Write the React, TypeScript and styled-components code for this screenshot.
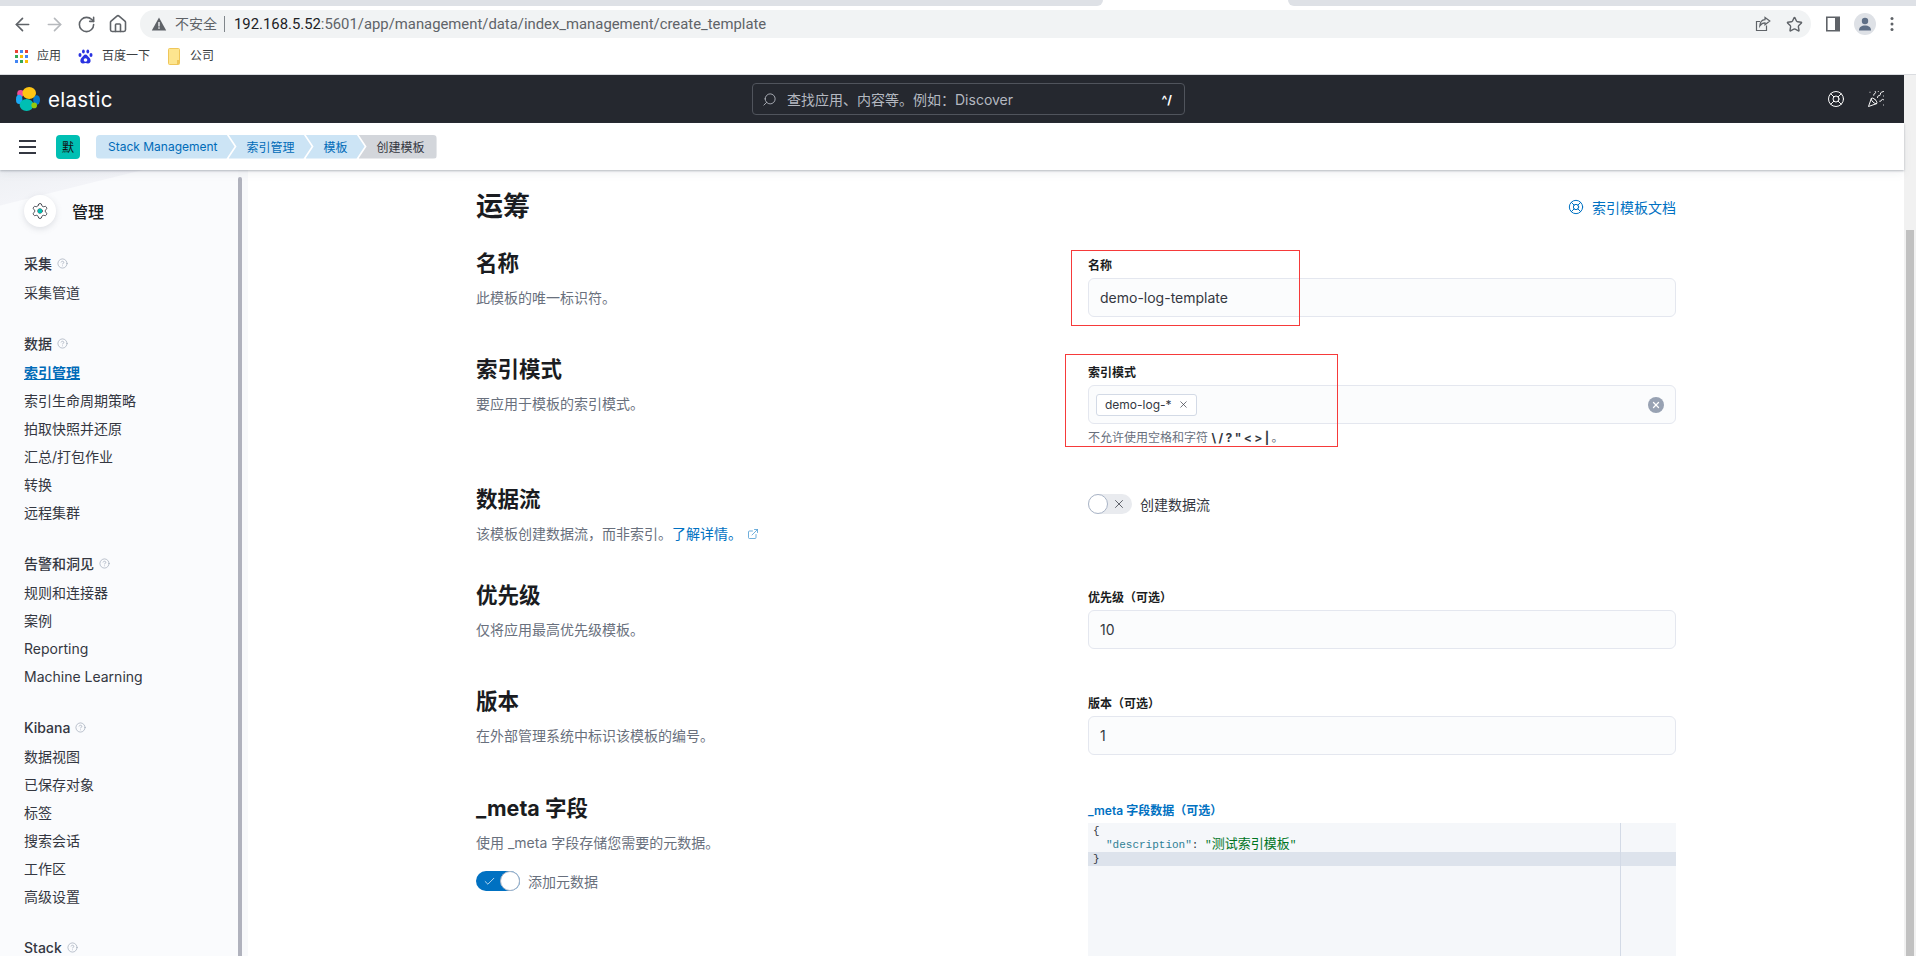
import React from "react";
import styled, { createGlobalStyle } from "styled-components";
import { ArrowLeft, ArrowRight, RotateCw, Home, Star, LifeBuoy, PartyPopper, Settings, Search, X, Check, ExternalLink, HelpCircle } from "lucide-react";

const Global = createGlobalStyle`
  html, body { margin: 0; padding: 0; height: 100%; overflow: hidden; background: #fff; }
  body { font-family: Inter, "Noto Sans CJK SC", sans-serif; color: #343741; }
  #root { height: 956px; }
  * { box-sizing: border-box; }
`;

const Page = styled.div`
  width: 1916px; height: 956px; display: flex; flex-direction: column; overflow: hidden;
`;

/* ---------- browser chrome ---------- */
const TabStrip = styled.div`
  height: 6px; display: flex; background: #fff; flex: none;
`;
const TabGrey = styled.div<{ $w: string; $r: string }>`
  width: ${p => p.$w}; background: #dee1e6; border-radius: ${p => p.$r};
`;
const TabActive = styled.div`
  width: 185px; background: #fff;
`;
const Toolbar = styled.div`
  height: 36px; padding-top: 4px; display: flex; align-items: flex-start; flex: none; background: #fff;
`;
const NavButton = styled.div`
  width: 32px; height: 28px; display: flex; align-items: center; justify-content: center; color: #5f6368;
`;
const NavGroup = styled.div`
  width: 140px; padding-left: 6px; display: flex; height: 28px;
`;
const AddressBar = styled.div`
  width: 1671px; height: 28px; border-radius: 14px; background: #f1f3f4; display: flex; align-items: center;
  padding-left: 11px; font-family: Roboto, "Noto Sans CJK SC", sans-serif; color: #5f6368;
`;
const Insecure = styled.span`
  font-size: 14px; margin-left: 8px; color: #5f6368; width: 50px; border-right: 1px solid #80868b; line-height: 16px;
`;
const Url = styled.div`
  font-size: 14.85px; margin-left: 9px; color: #5f6368; flex: 1; white-space: nowrap;
`;
const Host = styled.span`
  color: #202124;
`;
const AddressIcons = styled.div`
  display: flex; align-items: center; gap: 15px; padding-right: 8px; color: #5f6368;
`;
const ToolbarRight = styled.div`
  flex: 1; display: flex; align-items: center; height: 28px; padding-left: 15px; gap: 14px;
`;
const Avatar = styled.div`
  width: 22px; height: 22px; border-radius: 50%; background: #dee1e6; display: flex; align-items: center; justify-content: center;
`;
const Bookmarks = styled.div`
  height: 33px; padding-bottom: 4px; flex: none; display: flex; align-items: center; padding-left: 15px; background: #fff;
  border-bottom: 1px solid #dadce0; font-size: 12px; color: #3c4043;
`;
const Bookmark = styled.div<{ $gap: number; $w: number }>`
  width: ${p => p.$w}px; display: flex; align-items: center; gap: ${p => p.$gap}px; line-height: 16px;
`;
const AppArea = styled.div`
  flex: 1; display: flex; min-height: 0;
`;
const Viewport = styled.div`
  width: 1904px; display: flex; flex-direction: column; min-height: 0;
`;
const Scrollbar = styled.div`
  width: 12px; background: #f1f1f1; padding: 155px 2px 0 2px; display: flex;
`;
const ScrollThumb = styled.div`
  flex: 1; background: #c1c1c1;
`;

/* ---------- kibana header ---------- */
const Header = styled.div`
  height: 48px; flex: none; background: #25282f; display: flex; align-items: center; position: relative; padding: 0 16px;
`;
const Brand = styled.div`
  display: flex; align-items: center; gap: 8px; width: 736px; color: #fff; font-size: 20.5px; letter-spacing: 0.3px;
`;
const SearchBox = styled.div`
  width: 433px; height: 32px; border: 1px solid #50545c; border-radius: 4px; display: flex; align-items: center;
  padding: 0 10px 0 9px; color: #bfc3cb; font-size: 14px;
`;
const SearchText = styled.span`
  margin-left: 10px; flex: 1; color: #b4b8c0;
`;
const Hotkey = styled.span`
  color: #fff; font-size: 12px; font-weight: 700; margin-right: 2px;
`;
const HeaderIcons = styled.div`
  margin-left: auto; display: flex; gap: 22px; color: #fff; padding-right: 3px;
`;
const Crumbar = styled.div`
  height: 47px; flex: none; background: #fff; display: flex; align-items: center; padding-left: 19px;
  box-shadow: 0 1px 2px rgba(105, 112, 125, 0.45), 0 4px 8px rgba(105, 112, 125, 0.08);
  position: relative; z-index: 2;
`;
const Burger = styled.div`
  width: 17px; display: flex; flex-direction: column; gap: 4px; margin-right: 20px;
`;
const BurgerLine = styled.div`
  height: 2px; background: #343741;
`;
const Space = styled.div`
  width: 24px; height: 24px; border-radius: 4px; background: #00bfb3; color: #111; font-size: 12px; display: flex;
  align-items: center; justify-content: center; margin-right: 16px;
`;
const Crumbs = styled.div`
  display: flex; align-items: center;
`;
const Crumb = styled.div<{ $last?: boolean; $first?: boolean }>`
  height: 24px; display: flex; align-items: center; font-size: 12px; white-space: nowrap;
  background: ${p => (p.$last ? "#d3d6db" : "#cce4f5")};
  color: ${p => (p.$last ? "#343741" : "#006bb8")};
  padding: 0 ${p => (p.$last ? "12px" : "17px")} 0 ${p => (p.$first ? "12px" : "18px")};
  margin-left: ${p => (p.$first ? "0" : "-6px")};
  border-radius: ${p => (p.$first ? "4px 0 0 4px" : p.$last ? "0 4px 4px 0" : "0")};
  clip-path: ${p =>
    p.$first
      ? "polygon(0 0, calc(100% - 8px) 0, 100% 50%, calc(100% - 8px) 100%, 0 100%)"
      : p.$last
      ? "polygon(0 0, 100% 0, 100% 100%, 0 100%, 8px 50%)"
      : "polygon(0 0, calc(100% - 8px) 0, 100% 50%, calc(100% - 8px) 100%, 0 100%, 8px 50%)"};
`;

/* ---------- sidebar ---------- */
const Body = styled.div`
  flex: 1; display: flex; min-height: 0; overflow: hidden;
`;
const Sidebar = styled.aside`
  width: 248px; flex: none; display: flex; background: #f8f9fb;
`;
const SideInner = styled.div`
  width: 238px; padding: 25px 0 0 24px; overflow: hidden;
  background: linear-gradient(166deg, #eef0f4 0, #f3f4f8 34px, #fafbfd 35px);
`;
const SideThumb = styled.div`
  width: 4px; margin-top: 7px; background: #b0b2bd; border-radius: 2px 2px 0 0;
`;
const SideTitleRow = styled.div`
  display: flex; align-items: center; gap: 16px; margin-bottom: 21px; font-size: 16px; color: #1a1c21;
  font-weight: 500; height: 32px;
`;
const GearCircle = styled.div`
  width: 32px; height: 32px; border-radius: 50%; background: #fff; display: flex; align-items: center; justify-content: center;
  box-shadow: 0 2px 6px rgba(105, 112, 125, 0.2); position: relative; color: #343741;
`;
const GearDot = styled.div`
  position: absolute; left: 14px; top: 14px; width: 4px; height: 4px; background: #00bfb3; border-radius: 1px;
`;
const SideSection = styled.div`
  margin-bottom: 21px;
`;
const SideHead = styled.div`
  height: 30px; display: flex; align-items: center; gap: 5px; font-size: 14px; font-weight: 500; color: #343741; margin-bottom: 1px;
`;
const SideItem = styled.div<{ $active?: boolean }>`
  height: 28px; line-height: 28px; font-size: 14px; white-space: nowrap;
  color: ${p => (p.$active ? "#006bb8" : "#343741")};
  font-weight: ${p => (p.$active ? 600 : 400)};
  text-decoration: ${p => (p.$active ? "underline" : "none")};
`;

/* ---------- main ---------- */
const Main = styled.main`
  flex: 1; background: #fff; padding-top: 19px; min-width: 0; overflow: hidden;
`;
const Form = styled.div`
  width: 1200px; margin: 0 auto;
`;
const FormHead = styled.div`
  height: 36px; margin-bottom: 23px; display: flex; align-items: center; justify-content: space-between;
`;
const H1 = styled.h1`
  margin: 0; font-size: 27px; font-weight: 700; color: #1a1c21; line-height: 36px;
`;
const DocLink = styled.div`
  display: flex; align-items: center; gap: 8px; color: #0071c2; font-size: 14px;
`;
const Row = styled.section<{ $gap: number }>`
  display: grid; grid-template-columns: 588px 588px; column-gap: 24px; margin-bottom: ${p => p.$gap}px;
`;
const RowTitle = styled.h3`
  margin: 0 0 10px; font-size: 21.5px; line-height: 30px; font-weight: 700; color: #1a1c21;
`;
const RowDesc = styled.div`
  font-size: 14px; line-height: 20px; color: #69707d;
`;
const Link = styled.span`
  color: #0071c2;
`;
const ExtIcon = styled.span`
  display: inline-flex; margin-left: 5px; vertical-align: -1px; color: #0071c2; opacity: 0.75;
`;
const Field = styled.div<{ $top: number }>`
  position: relative; padding-top: ${p => p.$top}px;
`;
const Label = styled.div<{ $blue?: boolean }>`
  font-size: 12px; line-height: 18px; font-weight: 600; margin-bottom: 3px; color: ${p => (p.$blue ? "#0071c2" : "#1a1c21")};
`;
const Input = styled.div`
  height: 39px; border: 1px solid #e4e7ef; border-radius: 6px; background: #fbfcfd; display: flex; align-items: center;
  padding: 0 11px; font-size: 14px; color: #343741;
`;
const ComboInput = styled(Input)`
  padding: 0 7px 0 7px; justify-content: space-between;
`;
const Tag = styled.div`
  height: 22px; width: 101px; border: 1px solid #d3dae6; border-radius: 3px; background: #fff; display: flex; align-items: center;
  padding-left: 8px; gap: 6px; font-size: 12px; color: #343741;
`;
const ClearButton = styled.div`
  width: 16px; height: 16px; border-radius: 50%; background: #98a2b3; display: flex; align-items: center; justify-content: center; color: #fff; margin-right: 4px;
`;
const Help = styled.div`
  margin-top: 4px; font-size: 12px; line-height: 20px; color: #69707d;
`;
const Kbd = styled.span`
  font-weight: 700; color: #343741; margin-right: 2.4px;
`;
const RedBox = styled.div<{ $l: number; $t: number; $w: number; $h: number }>`
  position: absolute; left: ${p => p.$l}px; top: ${p => p.$t}px; width: ${p => p.$w}px; height: ${p => p.$h}px;
  border: 1px solid #f63a3a; pointer-events: none;
`;
const SwitchRow = styled.div<{ $top: number }>`
  display: flex; align-items: center; gap: 8px; margin-top: ${p => p.$top}px; font-size: 14px; color: #343741; height: 20px;
`;
const SwitchTrack = styled.div<{ $on?: boolean }>`
  width: 44px; height: 20px; border-radius: 10px; position: relative; display: flex; align-items: center;
  background: ${p => (p.$on ? "#0071c2" : "#e9ebef")};
  color: ${p => (p.$on ? "#fff" : "#343741")};
  justify-content: ${p => (p.$on ? "flex-start" : "flex-end")};
`;
const SwitchThumb = styled.div<{ $on?: boolean }>`
  position: absolute; top: 0; left: ${p => (p.$on ? "24px" : "0")}; width: 20px; height: 20px; border-radius: 50%; background: #fff;
  border: 1px solid #a9b4c6;
`;
const SwitchIcon = styled.span<{ $on?: boolean }>`
  display: flex; margin: ${p => (p.$on ? "0 0 0 7px" : "0 6px 0 0")};
`;
const SwitchText = styled.span<{ $muted?: boolean }>`
  color: ${p => (p.$muted ? "#69707d" : "#343741")};
`;
const Editor = styled.div`
  height: 240px; background: #f5f7fa; position: relative; padding-top: 1px; overflow: hidden;
  font-family: "Liberation Mono", "Noto Sans CJK SC", monospace; font-size: 11px; color: #343741;
`;
const EditorMinimapLine = styled.div`
  position: absolute; left: 532px; top: 0; bottom: 0; width: 1px; background: #d3dae6;
`;
const CodeLine = styled.div<{ $current?: boolean; $indent?: number }>`
  height: 14px; line-height: 14px; padding-left: ${p => 5 + (p.$indent || 0)}px; white-space: pre;
  background: ${p => (p.$current ? "#dde3ec" : "transparent")};
`;
const Str = styled.span`
  color: #00751f;
`;
const Cjk = styled.span`
  font-size: 13px; color: #00751f;
`;
const Key = styled.span`
  color: #2f7f95;
`;

const ElasticLogo = () => (
  <svg width="24" height="24" viewBox="0 0 24 24">
    <circle cx="4.6" cy="6.4" r="3.4" fill="#f04e98" />
    <ellipse cx="3.2" cy="12.4" rx="3.2" ry="4.6" fill="#1ba9f5" />
    <ellipse cx="20.6" cy="13" rx="3.4" ry="4.8" fill="#0077cc" />
    <ellipse cx="13.2" cy="6" rx="6.8" ry="6" fill="#fec514" />
    <ellipse cx="10.6" cy="18" rx="7" ry="6" fill="#00bfb3" />
    <circle cx="18.2" cy="18.4" r="2.8" fill="#93c90e" />
  </svg>
);

const Warn = () => (
  <svg width="16" height="16" viewBox="0 0 16 16">
    <path d="M8 1.5 15.2 14.5H.8Z" fill="#5f6368" />
    <rect x="7.3" y="6" width="1.4" height="4.5" fill="#f1f3f4" />
    <rect x="7.3" y="11.3" width="1.4" height="1.5" fill="#f1f3f4" />
  </svg>
);

const ShareIcon = () => (
  <svg width="16" height="16" viewBox="0 0 16 16" fill="none" stroke="#5f6368" strokeWidth="1.2">
    <path d="M11.5 9.5V14.5H1.5V5.5H5" />
    <path d="M14.8 5 10 1.5V3.6C6.8 3.8 5 6 4.8 10 6.2 7.8 7.8 6.8 10 6.8V8.8Z" />
  </svg>
);

const PanelIcon = () => (
  <svg width="14" height="16" viewBox="0 0 14 16">
    <rect width="14" height="15" y="0.5" fill="#5f6368" />
    <rect x="1.6" y="2" width="7.4" height="12" fill="#fff" />
  </svg>
);

const UserIcon = () => (
  <svg width="14" height="14" viewBox="0 0 14 14" fill="#5f6f86">
    <circle cx="7" cy="4" r="3.2" />
    <path d="M1 13.5C1 10 3.5 8.6 7 8.6S13 10 13 13.5Z" />
  </svg>
);

const Dots = () => (
  <svg width="4" height="16" viewBox="0 0 4 16" fill="#5f6368">
    <circle cx="2" cy="2.5" r="1.5" /><circle cx="2" cy="8" r="1.5" /><circle cx="2" cy="13.5" r="1.5" />
  </svg>
);

const AppsIcon = () => {
  const colors = ["#ea4335", "#4285f4", "#ea4335", "#34a853", "#fbbc04", "#4285f4", "#4285f4", "#34a853", "#fbbc04"];
  return (
    <svg width="13" height="13" viewBox="0 0 13 13">
      {colors.map((c, i) => (
        <rect key={i} x={(i % 3) * 5} y={Math.floor(i / 3) * 5} width="3" height="3" fill={c} />
      ))}
    </svg>
  );
};

const BaiduIcon = () => (
  <svg width="15" height="15" viewBox="0 0 15 15" fill="#2932e1">
    <ellipse cx="5.4" cy="2.4" rx="1.4" ry="2" />
    <ellipse cx="9.8" cy="2.4" rx="1.4" ry="2" />
    <ellipse cx="2" cy="6" rx="1.5" ry="2" />
    <ellipse cx="13" cy="6" rx="1.5" ry="2" />
    <path d="M7.5 5.6C5.8 5.6 5 7.6 3.6 8.8 2 10.2 1.6 14.5 5 14.5c1 0 1.6-.4 2.5-.4s1.6.4 2.5.4c3.4 0 3-4.3 1.4-5.7C10 7.6 9.2 5.6 7.5 5.6Z" />
    <circle cx="7.5" cy="11" r="1.8" fill="#fff" />
  </svg>
);

const FolderIcon = () => (
  <svg width="12" height="17" viewBox="0 0 12 17">
    <rect x="0.5" y="0.5" width="11" height="16" rx="1" fill="#fde58f" stroke="#efc65a" />
    <rect x="9" y="12" width="2" height="4" fill="#efc65a" />
  </svg>
);

const SectionHead = ({ children }: { children: React.ReactNode }) => (
  <SideHead>
    {children}
    <HelpCircle size={11} color="#98a2b3" strokeWidth={1.4} />
  </SideHead>
);

const sections: { title: string; items: string[] }[] = [
  { title: "采集", items: ["采集管道"] },
  { title: "数据", items: ["索引管理", "索引生命周期策略", "拍取快照并还原", "汇总/打包作业", "转换", "远程集群"] },
  { title: "告警和洞见", items: ["规则和连接器", "案例", "Reporting", "Machine Learning"] },
  { title: "Kibana", items: ["数据视图", "已保存对象", "标签", "搜索会话", "工作区", "高级设置"] },
  { title: "Stack", items: [] },
];

export default function App() {
  return (
    <Page>
      <Global />
      <TabStrip>
        <TabGrey $w="1103px" $r="0 0 6px 0" />
        <TabActive />
        <TabGrey $w="628px" $r="0 0 0 6px" />
      </TabStrip>
      <Toolbar>
        <NavGroup>
          <NavButton><ArrowLeft size={21} strokeWidth={1.9} /></NavButton>
          <NavButton><ArrowRight size={21} strokeWidth={1.9} color="#b6b9bd" /></NavButton>
          <NavButton><RotateCw size={19} strokeWidth={2} /></NavButton>
          <NavButton><Home size={20} strokeWidth={1.9} /></NavButton>
        </NavGroup>
        <AddressBar>
          <Warn />
          <Insecure>不安全</Insecure>
          <Url><Host>192.168.5.52</Host>:5601/app/management/data/index_management/create_template</Url>
          <AddressIcons>
            <ShareIcon />
            <Star size={17} strokeWidth={2} />
          </AddressIcons>
        </AddressBar>
        <ToolbarRight>
          <PanelIcon />
          <Avatar><UserIcon /></Avatar>
          <Dots />
        </ToolbarRight>
      </Toolbar>
      <Bookmarks>
        <Bookmark $gap={9} $w={63}><AppsIcon />应用</Bookmark>
        <Bookmark $gap={9} $w={90}><BaiduIcon />百度一下</Bookmark>
        <Bookmark $gap={10} $w={60}><FolderIcon />公司</Bookmark>
      </Bookmarks>
      <AppArea>
        <Viewport>
          <Header>
            <Brand><ElasticLogo />elastic</Brand>
            <SearchBox>
              <Search size={15} strokeWidth={1.3} style={{ transform: "scaleX(-1)" }} />
              <SearchText>查找应用、内容等。例如：Discover</SearchText>
              <Hotkey>^/</Hotkey>
            </SearchBox>
            <HeaderIcons>
              <LifeBuoy size={18} strokeWidth={1.3} />
              <PartyPopper size={18} strokeWidth={1.3} />
            </HeaderIcons>
          </Header>
          <Crumbar>
            <Burger><BurgerLine /><BurgerLine /><BurgerLine /></Burger>
            <Space>默</Space>
            <Crumbs>
              <Crumb $first>Stack Management</Crumb>
              <Crumb>索引管理</Crumb>
              <Crumb>模板</Crumb>
              <Crumb $last>创建模板</Crumb>
            </Crumbs>
          </Crumbar>
          <Body>
            <Sidebar>
              <SideInner>
                <SideTitleRow>
                  <GearCircle>
                    <Settings size={18} strokeWidth={1.2} />
                    <GearDot />
                  </GearCircle>
                  管理
                </SideTitleRow>
                {sections.map(s => (
                  <SideSection key={s.title}>
                    <SectionHead>{s.title}</SectionHead>
                    {s.items.map(i => (
                      <SideItem key={i} $active={i === "索引管理"}>{i}</SideItem>
                    ))}
                  </SideSection>
                ))}
              </SideInner>
              <SideThumb />
            </Sidebar>
            <Main>
              <Form>
                <FormHead>
                  <H1>运筹</H1>
                  <DocLink><LifeBuoy size={16} strokeWidth={1.5} />索引模板文档</DocLink>
                </FormHead>
                <Row $gap={37}>
                  <div>
                    <RowTitle>名称</RowTitle>
                    <RowDesc>此模板的唯一标识符。</RowDesc>
                  </div>
                  <Field $top={9}>
                    <Label>名称</Label>
                    <Input>demo-log-template</Input>
                    <RedBox $l={-17} $t={2} $w={229} $h={76} />
                  </Field>
                </Row>
                <Row $gap={36}>
                  <div>
                    <RowTitle>索引模式</RowTitle>
                    <RowDesc>要应用于模板的索引模式。</RowDesc>
                  </div>
                  <Field $top={10}>
                    <Label>索引模式</Label>
                    <ComboInput>
                      <Tag>demo-log-* <X size={11} strokeWidth={1.5} /></Tag>
                      <ClearButton><X size={10} strokeWidth={3} /></ClearButton>
                    </ComboInput>
                    <Help>不允许使用空格和字符 <Kbd>\</Kbd><Kbd>/</Kbd><Kbd>?</Kbd><Kbd>"</Kbd><Kbd>&lt;</Kbd><Kbd>&gt;</Kbd><Kbd>|</Kbd>。</Help>
                    <RedBox $l={-23} $t={0} $w={273} $h={93} />
                  </Field>
                </Row>
                <Row $gap={36}>
                  <div>
                    <RowTitle>数据流</RowTitle>
                    <RowDesc>
                      该模板创建数据流，而非索引。<Link>了解详情。</Link>
                      <ExtIcon><ExternalLink size={12} strokeWidth={1.5} /></ExtIcon>
                    </RowDesc>
                  </div>
                  <div>
                    <SwitchRow $top={10}>
                      <SwitchTrack>
                        <SwitchThumb />
                        <SwitchIcon><X size={14} strokeWidth={1.3} /></SwitchIcon>
                      </SwitchTrack>
                      <SwitchText>创建数据流</SwitchText>
                    </SwitchRow>
                  </div>
                </Row>
                <Row $gap={37}>
                  <div>
                    <RowTitle>优先级</RowTitle>
                    <RowDesc>仅将应用最高优先级模板。</RowDesc>
                  </div>
                  <Field $top={9}>
                    <Label>优先级（可选）</Label>
                    <Input>10</Input>
                  </Field>
                </Row>
                <Row $gap={38}>
                  <div>
                    <RowTitle>版本</RowTitle>
                    <RowDesc>在外部管理系统中标识该模板的编号。</RowDesc>
                  </div>
                  <Field $top={9}>
                    <Label>版本（可选）</Label>
                    <Input>1</Input>
                  </Field>
                </Row>
                <Row $gap={0}>
                  <div>
                    <RowTitle>_meta 字段</RowTitle>
                    <RowDesc>使用 _meta 字段存储您需要的元数据。</RowDesc>
                    <SwitchRow $top={18}>
                      <SwitchTrack $on>
                        <SwitchIcon $on><Check size={13} strokeWidth={1.3} /></SwitchIcon>
                        <SwitchThumb $on />
                      </SwitchTrack>
                      <SwitchText $muted>添加元数据</SwitchText>
                    </SwitchRow>
                  </div>
                  <Field $top={9}>
                    <Label $blue>_meta 字段数据（可选）</Label>
                    <Editor>
                      <EditorMinimapLine />
                      <CodeLine>{"{"}</CodeLine>
                      <CodeLine $indent={13}><Key>"description"</Key>: <Str>"</Str><Cjk>测试索引模板</Cjk><Str>"</Str></CodeLine>
                      <CodeLine $current>{"}"}</CodeLine>
                    </Editor>
                  </Field>
                </Row>
              </Form>
            </Main>
          </Body>
        </Viewport>
        <Scrollbar><ScrollThumb /></Scrollbar>
      </AppArea>
    </Page>
  );
}
